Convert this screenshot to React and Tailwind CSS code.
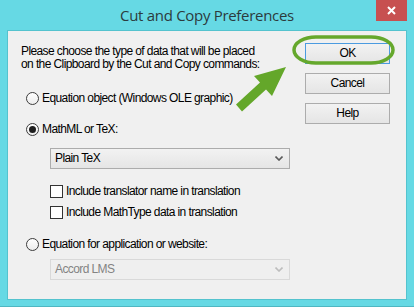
import React from 'react';

function Radio({ checked }) {
  return (
    <span className="w-[13px] h-[13px] rounded-full border border-[#3c3c3c] bg-gradient-to-b from-[#ffffff] to-[#ededed] flex items-center justify-center shrink-0">
      {checked && <span className="w-[7px] h-[7px] rounded-full bg-[#1e1e1e]" />}
    </span>
  );
}

function Checkbox() {
  return <span className="w-[13px] h-[13px] border border-[#333333] bg-white shrink-0" />;
}

function Chevron({ color }) {
  return (
    <svg width="8" height="5" viewBox="0 0 8 5" className="shrink-0">
      <path d="M0.5 0.5 L4 4 L7.5 0.5" fill="none" stroke={color} strokeWidth="1.6" />
    </svg>
  );
}

function Select({ label, disabled }) {
  return (
    <div
      className={
        disabled
          ? 'ml-[29px] w-[240px] h-[21px] border border-[#d9d9d9] bg-[#efefef] flex items-center justify-between pl-[4px] pr-[6px] text-[#838383]'
          : 'ml-[29px] w-[240px] h-[21px] border border-[#acacac] bg-gradient-to-b from-[#f2f2f2] to-[#e5e5e5] flex items-center justify-between pl-[4px] pr-[6px] text-black'
      }
    >
      <span>{label}</span>
      <Chevron color={disabled ? '#bdbdbd' : '#5a5a5a'} />
    </div>
  );
}

function Button({ children, focused }) {
  return (
    <div
      className={
        focused
          ? 'h-[21px] w-[85px] border border-[#4b9be0] bg-gradient-to-b from-[#f2f2f2] to-[#e5e5e5] flex items-center justify-center'
          : 'h-[21px] w-[85px] border border-[#acacac] bg-gradient-to-b from-[#f2f2f2] to-[#e5e5e5] flex items-center justify-center'
      }
    >
      {children}
    </div>
  );
}

export default function App() {
  return (
    <div className="relative w-[414px] h-[307px] bg-[#66d9e4] flex flex-col overflow-hidden border-b border-[#4fb7c2]">
      {/* Title bar */}
      <div className="h-[30px] flex items-start">
        <div className="w-[38px]" />
        <div className="flex-1 h-[30px] flex items-center justify-center text-[15px] tracking-[-0.3px] text-[#2c3b3d] font-['Open_Sans',sans-serif]">
          Cut and Copy Preferences
        </div>
        <div className="w-[31px] h-[21px] mr-[7px] bg-[#c75050] flex items-center justify-center">
          <svg width="9" height="9" viewBox="0 0 9 9">
            <path d="M1 1 L8 8 M8 1 L1 8" stroke="white" strokeWidth="2" />
          </svg>
        </div>
      </div>

      {/* Client area */}
      <div className="mx-[7px] h-[270px] bg-[#f0f0f0] border border-[#54c3ce] flex text-[12px] leading-[13px] tracking-[-0.6px] text-black font-['Liberation_Sans',Arial,sans-serif]">
        <div className="flex-1 pl-[13px] pt-[14px] flex flex-col">
          <p>
            Please choose the type of data that will be placed
            <br />
            on the Clipboard by the Cut and Copy commands:
          </p>

          <div className="mt-[21px] ml-[5px] flex items-center gap-[3px] h-[13px]">
            <Radio />
            <span>Equation object (Windows OLE graphic)</span>
          </div>

          <div className="mt-[18px] ml-[5px] flex items-center gap-[3px] h-[13px]">
            <Radio checked />
            <span>MathML or TeX:</span>
          </div>

          <div className="mt-[12px]">
            <Select label="Plain TeX" />
          </div>

          <div className="mt-[16px] ml-[29px] flex items-center gap-[3px] h-[13px]">
            <Checkbox />
            <span>Include translator name in translation</span>
          </div>

          <div className="mt-[8px] ml-[29px] flex items-center gap-[3px] h-[13px]">
            <Checkbox />
            <span>Include MathType data in translation</span>
          </div>

          <div className="mt-[19px] ml-[5px] flex items-center gap-[3px] h-[13px]">
            <Radio />
            <span>Equation for application or website:</span>
          </div>

          <div className="mt-[8px]">
            <Select label="Accord LMS" disabled />
          </div>
        </div>

        <div className="w-[85px] mr-[16px] mt-[12px] flex flex-col gap-[9px]">
          <Button focused>OK</Button>
          <Button>Cancel</Button>
          <Button>Help</Button>
        </div>
      </div>

      {/* Annotation: green arrow and ring around OK */}
      <svg className="absolute left-0 top-0 pointer-events-none" width="414" height="307" viewBox="0 0 414 307">
        <rect x="294" y="37" width="99" height="26" rx="22" ry="13" fill="none" stroke="#65a82c" strokeWidth="3.5" />
        <polygon
          points="286,67 254,76 260,82.6 236,104.6 242,111.4 266,89.4 272,96"
          fill="#64a72a"
        />
      </svg>
    </div>
  );
}
